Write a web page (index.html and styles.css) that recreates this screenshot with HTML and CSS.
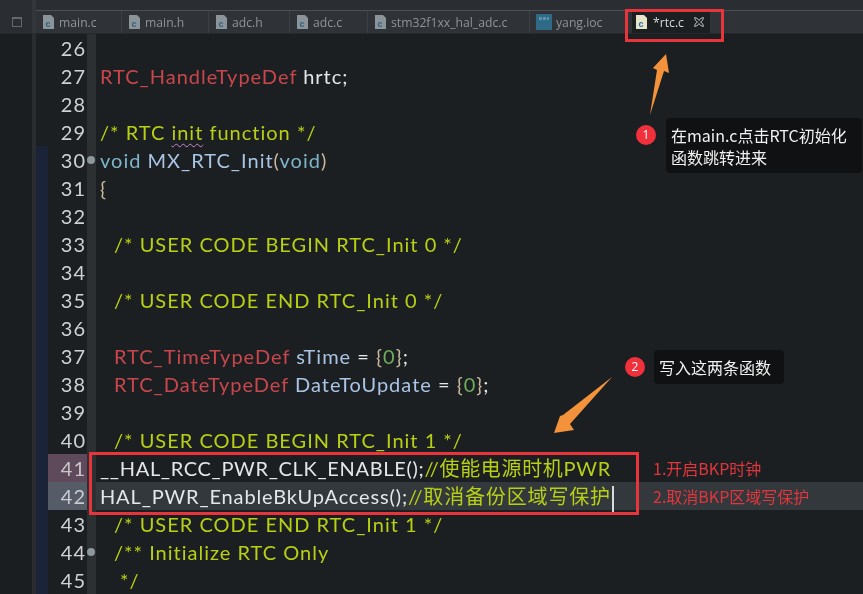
FILE: index.html
```html
<!DOCTYPE html>
<html lang="zh">
<head>
<meta charset="utf-8">
<title>rtc.c</title>
<link rel="stylesheet" href="styles.css">
</head>
<body>
<div class="shot">
  <div class="topstrip"><span class="toprail"></span><span class="topline"></span></div>
  <div class="tabbar">
    <div class="tabrail"><span class="minimize"></span></div>
    <div class="tab w86"><svg class="ficon" viewBox="0 0 11 14"><path d="M0 0h8l3 3v11H0z" fill="#8b9499"/><text x="2.5" y="12" class="fglyph">c</text></svg>main.c</div>
    <div class="tab w87"><svg class="ficon" viewBox="0 0 11 14"><path d="M0 0h8l3 3v11H0z" fill="#8b9499"/><text x="2.5" y="12" class="fglyph">c</text></svg>main.h</div>
    <div class="tab w81"><svg class="ficon" viewBox="0 0 11 14"><path d="M0 0h8l3 3v11H0z" fill="#8b9499"/><text x="2.5" y="12" class="fglyph">c</text></svg>adc.h</div>
    <div class="tab w78"><svg class="ficon" viewBox="0 0 11 14"><path d="M0 0h8l3 3v11H0z" fill="#8b9499"/><text x="2.5" y="12" class="fglyph">c</text></svg>adc.c</div>
    <div class="tab w162"><svg class="ficon" viewBox="0 0 11 14"><path d="M0 0h8l3 3v11H0z" fill="#8b9499"/><text x="2.5" y="12" class="fglyph">c</text></svg>stm32f1xx_hal_adc.c</div>
    <div class="tab w100 ioc"><svg class="ioc-icon" viewBox="0 0 16 16"><rect width="16" height="16" fill="#2f6a86"/><path d="M3 3h3v3H3zM7 3h3v3H7zM11 3h2v3h-2z" fill="#5f92a8"/></svg>yang.ioc</div>
    <div class="tab active"><svg class="ficon active-icon" viewBox="0 0 11 14"><path d="M0 0h8l3 3v11H0z" fill="#e9e4c8"/><text x="2.5" y="12" class="fglyph blue">c</text></svg>*rtc.c<svg class="close" viewBox="0 0 12 12"><path d="M1.5 1.5l3 1 1.5 2 1.5-2 3-1-1 3-2 1.5 2 1.5 1 3-3-1-1.5-2-1.5 2-3 1 1-3 2-1.5-2-1.5z" fill="none" stroke="#b8bcbe" stroke-width="1"/></svg></div>
  </div>
  <div class="editor">
    <div class="row"><i class="rail"></i><i class="mark"></i><b class="num">26</b><i class="fold"></i><code class="code"></code></div>
    <div class="row"><i class="rail"></i><i class="mark"></i><b class="num">27</b><i class="fold"></i><code class="code"><span class="type">RTC_HandleTypeDef</span> hrtc;</code></div>
    <div class="row"><i class="rail"></i><i class="mark"></i><b class="num">28</b><i class="fold"></i><code class="code"></code></div>
    <div class="row"><i class="rail"></i><i class="mark"></i><b class="num">29</b><i class="fold"></i><code class="code"><span class="cmt">/* RTC <span class="squig">init</span> function */</span></code></div>
    <div class="row"><i class="rail"></i><i class="mark on"></i><b class="num">30</b><i class="fold"><em class="dot"></em></i><code class="code"><span class="kw">void</span> <span class="fn">MX_RTC_Init</span><span class="paren">(</span><span class="kw">void</span><span class="paren">)</span></code></div>
    <div class="row"><i class="rail"></i><i class="mark on"></i><b class="num">31</b><i class="fold"></i><code class="code"><span class="paren">{</span></code></div>
    <div class="row"><i class="rail"></i><i class="mark on"></i><b class="num">32</b><i class="fold"></i><code class="code"></code></div>
    <div class="row"><i class="rail"></i><i class="mark on"></i><b class="num">33</b><i class="fold"></i><code class="code in"><span class="cmt">/* USER CODE BEGIN RTC_Init 0 */</span></code></div>
    <div class="row"><i class="rail"></i><i class="mark on"></i><b class="num">34</b><i class="fold"></i><code class="code"></code></div>
    <div class="row"><i class="rail"></i><i class="mark on"></i><b class="num">35</b><i class="fold"></i><code class="code in"><span class="cmt">/* USER CODE END RTC_Init 0 */</span></code></div>
    <div class="row"><i class="rail"></i><i class="mark on"></i><b class="num">36</b><i class="fold"></i><code class="code"></code></div>
    <div class="row"><i class="rail"></i><i class="mark on"></i><b class="num">37</b><i class="fold"></i><code class="code in"><span class="type">RTC_TimeTypeDef</span> <span class="var">sTime</span> = <span class="paren">{</span><span class="lit">0</span><span class="paren">}</span>;</code></div>
    <div class="row"><i class="rail"></i><i class="mark on"></i><b class="num">38</b><i class="fold"></i><code class="code in"><span class="type">RTC_DateTypeDef</span> <span class="var">DateToUpdate</span> = <span class="paren">{</span><span class="lit">0</span><span class="paren">}</span>;</code></div>
    <div class="row"><i class="rail"></i><i class="mark on"></i><b class="num">39</b><i class="fold"></i><code class="code"></code></div>
    <div class="row"><i class="rail"></i><i class="mark on"></i><b class="num">40</b><i class="fold"></i><code class="code in"><span class="cmt">/* USER CODE BEGIN RTC_Init 1 */</span></code></div>
    <div class="row"><i class="rail"></i><i class="mark on"></i><b class="num pink">41</b><i class="fold"></i><code class="code tight">__HAL_RCC_PWR_CLK_ENABLE();<span class="cmt">//使能电源时机PWR</span></code></div>
    <div class="row"><i class="rail"></i><i class="mark on"></i><b class="num slate">42</b><i class="fold"></i><code class="code current">HAL_PWR_EnableBkUpAccess();<span class="cmt">//取消备份区域写保护</span><span class="caret"></span></code></div>
    <div class="row"><i class="rail"></i><i class="mark on"></i><b class="num">43</b><i class="fold"></i><code class="code in"><span class="cmt">/* USER CODE END RTC_Init 1 */</span></code></div>
    <div class="row"><i class="rail"></i><i class="mark on"></i><b class="num">44</b><i class="fold"><em class="dot"></em></i><code class="code in"><span class="cmt">/** Initialize RTC Only</span></code></div>
    <div class="row"><i class="rail"></i><i class="mark on"></i><b class="num">45</b><i class="fold"></i><code class="code in"><span class="cmt">&nbsp;*/</span></code></div>
  </div>

  <div class="redbox tabbox"></div>
  <div class="redbox codebox"></div>
  <svg class="arrows" viewBox="0 0 863 594">
    <path d="M650 115L657 70L653 68L666 54L669 73L664 71z" fill="#f4923c"/>
    <path d="M612 377L570 424L574 430L554 433L560 416L563 415z" fill="#f4923c"/>
  </svg>
  <div class="badge b1">1</div>
  <div class="callout c1">在main.c点击RTC初始化<br>函数跳转进来</div>
  <div class="badge b2">2</div>
  <div class="callout c2">写入这两条函数</div>
  <div class="note n1">1.开启BKP时钟</div>
  <div class="note n2">2.取消BKP区域写保护</div>
</div>
</body>
</html>
```
FILE: styles.css
```css
* { box-sizing: border-box; }
html, body { margin: 0; padding: 0; }
body { background: #1c1f22; overflow: hidden; }
.shot { position: relative; width: 863px; height: 594px; overflow: hidden; background: #1c1f22; display: flex; flex-direction: column; filter: blur(0.35px); }

.topstrip { height: 11px; background: #2a2e32; flex: none; display: flex; align-items: flex-end; }
.toprail { width: 36px; height: 11px; background: linear-gradient(90deg, #2a2e32 0 32px, #33373b 32px 36px); flex: none; }
.topline { flex: 1; height: 1px; background: #4b4f53; }
.tabbar { height: 23px; display: flex; background: #2f3337; flex: none; font: 12.2px "Open Sans", sans-serif; color: #8f9496; border-bottom: 1px solid #26292c; }
.tabrail { width: 36px; display: flex; align-items: center; padding-left: 12px; background: linear-gradient(90deg, #2a2e32 0 32px, #33373b 32px 36px); flex: none; }
.minimize { width: 10px; height: 10px; border: 1px solid #66696c; border-top-width: 2px; }
.tab { display: flex; align-items: center; padding-left: 7px; border-right: 1px solid #3d4145; flex: none; }
.w86 { width: 86px; } .w87 { width: 87px; } .w81 { width: 81px; } .w78 { width: 78px; } .w162 { width: 162px; } .w100 { width: 97px; }
.ficon { width: 11px; height: 14px; margin-right: 5px; flex: none; }
.fglyph { font: bold 9px "Liberation Sans", sans-serif; fill: #2e5f7c; }
.fglyph.blue { fill: #1b6fb0; }
.ioc { padding-left: 6px; border-right: none; }
.ioc-icon { width: 16px; height: 16px; margin-right: 4px; flex: none; }
.tab.active { width: 78px; margin-left: 5px; background: #1c1f22; color: #d8dadb; padding-left: 4px; border-right: none; }
.active-icon { margin-right: 6px; }
.close { width: 12px; height: 12px; margin-left: 9px; flex: none; }

.editor { flex: 1; display: flex; flex-direction: column; }
.row { height: 28px; display: flex; flex: none; font: 20px/28px Lato, "Noto Sans CJK SC", sans-serif; }
.rail { width: 36px; flex: none; background: linear-gradient(90deg, #1b1e21 0 32px, #2a2d30 32px 36px); }
.mark { width: 12px; flex: none; }
.mark.on { background: #1a2338; }
.num { width: 39px; flex: none; text-align: right; font-weight: 400; color: #cfd2d4; letter-spacing: 1px; padding-right: 1px; }
.num.pink { background: #5e4a5a; color: #c9c6c9; }
.num.slate { background: #555c68; color: #c9cbcf; }
.fold { width: 9px; flex: none; background: #2d3033; display: flex; align-items: center; justify-content: center; font-style: normal; }
.dot { width: 8px; height: 8px; border-radius: 50%; background: #8d989e; display: block; margin-right: 1px; }
.code { flex: 1; padding-left: 4px; font: inherit; color: #e4e6e7; white-space: pre; letter-spacing: 1px; }
.code.in { padding-left: 18px; }
.code.tight { letter-spacing: 0.68px; }
.code.current { background: #33383d; letter-spacing: 0.85px; }
.type { color: #c9474c; }
.cmt { color: #b8d014; }
.kw { color: #7db4c9; }
.fn { color: #a9c4e4; }
.var { color: #a9c4e4; }
.paren { color: #c9b79c; }
.lit { color: #6fae5a; }
.squig { text-decoration: underline wavy #c58ac8 1px; text-underline-offset: 3px; }
.caret { display: inline-block; width: 2px; height: 26px; background: #d8dadb; margin-left: 1px; vertical-align: middle; }

.redbox { position: absolute; border: 3px solid #e8353c; }
.tabbox { left: 625px; top: 9px; width: 99px; height: 33px; }
.codebox { left: 89px; top: 452px; width: 550px; height: 63px; }
.arrows { position: absolute; left: 0; top: 0; width: 863px; height: 594px; pointer-events: none; }
.badge { position: absolute; width: 20px; height: 20px; border-radius: 50%; background: #f0303a; color: #fff; font: 12px/20px "Open Sans", sans-serif; text-align: center; }
.b1 { left: 636px; top: 125px; }
.b2 { left: 625px; top: 357px; }
.callout { position: absolute; background: #101113; color: #f1f1f1; border-radius: 4px; font: 16px/22px "Noto Sans CJK SC", sans-serif; }
.c1 { left: 666px; top: 118px; width: 196px; height: 55px; padding: 6px 0 0 5px; }
.c2 { left: 654px; top: 350px; width: 130px; height: 34px; padding: 6px 0 0 5px; }
.note { position: absolute; color: #e0363c; font: 16px/20px "Noto Sans CJK SC", sans-serif; white-space: nowrap; }
.n1 { left: 653px; top: 458px; }
.n2 { left: 653px; top: 486px; }
```
